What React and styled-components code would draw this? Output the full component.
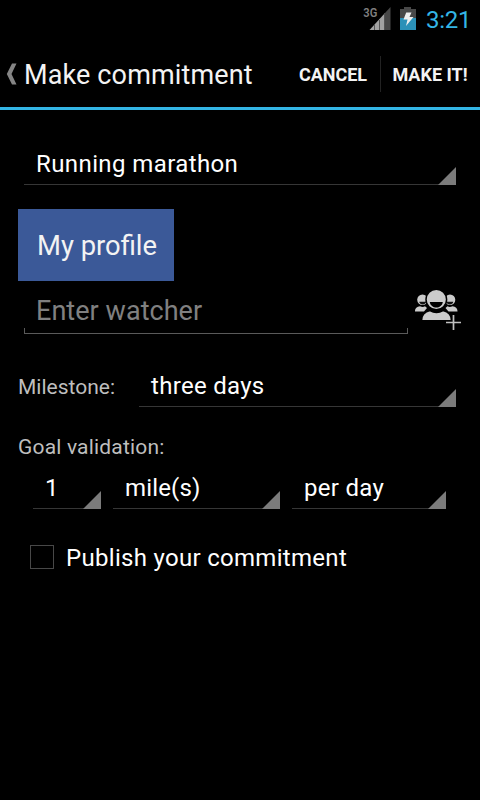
import React, { useState } from 'react';
import styled, { createGlobalStyle } from 'styled-components';

const GlobalStyle = createGlobalStyle`
  * {
    box-sizing: border-box;
  }

  body {
    margin: 0;
    background: #000;
    font-family: Roboto, sans-serif;
  }
`;

const Screen = styled.div`
  width: 480px;
  height: 800px;
  overflow: hidden;
  background: #000;
  color: #fff;
`;

const StatusBar = styled.header`
  display: flex;
  justify-content: flex-end;
  height: 38px;
  padding-right: 10px;
`;

const Clock = styled.span`
  width: 44px;
  margin-left: 9px;
  font-size: 24px;
  line-height: 40px;
  letter-spacing: -0.3px;
  color: #33b5e5;
`;

const ActionBar = styled.nav`
  display: flex;
  align-items: center;
  height: 72px;
  padding: 3px 0 0 6px;
  border-bottom: 3px solid #33b5e5;
`;

const Title = styled.h1`
  flex: 1;
  margin: 0 0 0 6px;
  padding-top: 2px;
  font-size: 27px;
  font-weight: 400;
  line-height: 36px;
  letter-spacing: 0.13px;
  color: #f3f3f3;
  white-space: nowrap;
`;

const Action = styled.button`
  width: ${(p) => p.$width}px;
  height: 36px;
  padding: 1px 1px 0 0;
  border: 0;
  border-left: ${(p) => (p.$divided ? '1px solid #222' : '0')};
  background: none;
  font: 700 18px/36px Roboto, sans-serif;
  color: #f3f3f3;
  white-space: nowrap;
`;

const Form = styled.main`
  display: flex;
  flex-direction: column;
  padding: 33px 18px 0;
`;

const Row = styled.div`
  display: flex;
  align-items: flex-start;
  height: ${(p) => p.$height}px;
  padding-left: ${(p) => p.$indent || 0}px;
  gap: ${(p) => p.$gap || 0}px;
`;

// the line under the value and the corner triangle are both part of the spinner
const SpinnerBox = styled.div`
  display: flex;
  justify-content: space-between;
  align-items: flex-end;
  width: ${(p) => p.$width}px;
  height: 42px;
  padding-left: 12px;
  border-bottom: 1px solid #363636;
`;

const SpinnerValue = styled.span`
  font-size: 24px;
  line-height: 40px;
  letter-spacing: ${(p) => p.$spacing};
  white-space: nowrap;
`;

const Corner = styled.i`
  width: 18px;
  height: 18px;
  margin-bottom: -1px;
  background: #7b7b7b;
  clip-path: polygon(100% 0, 100% 100%, 0 100%);
`;

const ProfileButton = styled.button`
  width: 156px;
  height: 72px;
  padding: 1px 0 0 2px;
  border: 0;
  background: #3b5998;
  font: 400 27.4px/72px Roboto, sans-serif;
  color: #f3f3f3;
`;

const WatcherInput = styled.input`
  width: 384px;
  height: 47px;
  padding: 0 12px;
  border: 0;
  outline: 0;
  background:
    linear-gradient(#5a5a5a, #5a5a5a) 0 100% / 100% 1px no-repeat,
    linear-gradient(#5a5a5a, #5a5a5a) 0 100% / 1px 6px no-repeat,
    linear-gradient(#5a5a5a, #5a5a5a) 100% 100% / 1px 6px no-repeat;
  font: 400 27px Roboto, sans-serif;
  letter-spacing: 0.05px;
  color: #fff;

  &::placeholder {
    color: #808080;
    opacity: 1;
  }
`;

const Label = styled.span`
  width: ${(p) => p.$width}px;
  padding-top: ${(p) => p.$drop || 0}px;
  font-size: 21px;
  line-height: 44px;
  letter-spacing: ${(p) => p.$spacing};
  color: #bebebe;
  white-space: nowrap;
`;

const CheckLabel = styled.label`
  display: flex;
  align-items: center;
  gap: 12px;
  height: 48px;
  padding-left: 12px;
  font-size: 24px;
  letter-spacing: 0.3px;
  white-space: nowrap;

  span {
    padding-top: 2px;
  }
`;

const Check = styled.input`
  appearance: none;
  width: 24px;
  height: 24px;
  margin: 0;
  border: 1px solid #484848;

  &:checked {
    background: #33b5e5;
  }
`;

function StatusIcons() {
  return (
    <svg width="54" height="38" viewBox="0 0 54 38">
      <text x="0.3" y="17" fontFamily="Roboto" fontWeight="600" fontSize="12.8" textLength="14" lengthAdjust="spacingAndGlyphs" fill="#7f7f7f">3G</text>
      {/* signal */}
      <path d="M22 13 27.500 7V30H22Z" fill="#484848" />
      <path d="M6.500 30 22 13V30Z" fill="#a2a2a2" />
      <path d="M11.500 25v5M16.500 20v10M21.500 14v16" stroke="#555" />
      {/* battery */}
      <path d="M41 7h7v2h5v9H37V9h4Z" fill="#484848" />
      <path d="M37 18h16v12H37Z" fill="#2b91b8" />
      <path d="M43.200 12.500h5.300l-2 4.500h4l-7.500 9 1.500-6.500h-4Z" fill="#eee" />
    </svg>
  );
}

function BackIcon() {
  return (
    <svg width="12" height="24" viewBox="0 0 12 24">
      <path d="M6 1.500h4.500L5.500 12l5 10.500H6L.8 12Z" fill="#858585" />
    </svg>
  );
}

const IconButton = styled.button`
  height: 44px;
  padding: 0;
  border: 0;
  background: none;

  svg {
    display: block;
  }
`;

function GroupMember() {
  return (
    <>
      <circle cx="8.500" cy="12.700" r="5.300" />
      <path d="M1 24.500c0-3.500 2-5 5-5.300 2 1 3.500 1 5 0L13 21l-3 3.500Z" />
      <path d="M5.200 14.800h7c-.5 3.500-6.500 3.500-7 0Z" fill="#111" />
    </>
  );
}

function AddGroupIcon() {
  return (
    <svg width="48" height="44" viewBox="0 0 48 44" fill="#cbcbcb">
      <GroupMember />
      <g transform="matrix(-1 0 0 1 44.500 0)">
        <GroupMember />
      </g>
      <g stroke="#000" strokeWidth="1.500">
        <path d="M7.500 33.700c0-6 3.500-9.200 8.500-10.200 4 2.500 9 2.500 13 0 5 1 8.500 4.200 8.500 10.200Z" />
        <circle cx="22.300" cy="12.500" r="10.300" />
      </g>
      <path d="M15.800 15h13c-.8 7.300-12.200 7.300-13 0Z" fill="#000" />
      <path d="M39.500 27v17M31 35.500h17" stroke="#000" strokeWidth="3.500" />
      <path d="M39.500 28v15M32 35.500h15" stroke="#c0c0c0" strokeWidth="1.700" />
    </svg>
  );
}

function Spinner({ width, spacing = '0.3px', children }) {
  return (
    <SpinnerBox $width={width}>
      <SpinnerValue $spacing={spacing}>{children}</SpinnerValue>
      <Corner />
    </SpinnerBox>
  );
}

function App() {
  const [watcher, setWatcher] = useState('');

  return (
    <>
      <GlobalStyle />
      <Screen>
        <StatusBar>
          <StatusIcons />
          <Clock>3:21</Clock>
        </StatusBar>
        <ActionBar>
          <BackIcon />
          <Title>Make commitment</Title>
          <Action $width={93}>CANCEL</Action>
          <Action $width={100} $divided>MAKE IT!</Action>
        </ActionBar>
        <Form>
          <Row $height={66} $indent={6}>
            <Spinner width={432} spacing="0.4px">Running marathon</Spinner>
          </Row>
          <Row $height={78}>
            <ProfileButton>My profile</ProfileButton>
          </Row>
          <Row $height={78} $indent={6} $gap={6}>
            <WatcherInput
              placeholder="Enter watcher"
              value={watcher}
              onChange={(e) => setWatcher(e.target.value)}
            />
            <IconButton aria-label="Add watcher">
              <AddGroupIcon />
            </IconButton>
          </Row>
          <Row $height={59}>
            <Label $width={121}>Milestone:</Label>
            <Spinner width={317}>three days</Spinner>
          </Row>
          <Row $height={43}>
            <Label $drop={1} $spacing="0.18px">Goal validation:</Label>
          </Row>
          <Row $height={66} $indent={15} $gap={12}>
            <Spinner width={68}>1</Spinner>
            <Spinner width={167} spacing="0.15px">mile(s)</Spinner>
            <Spinner width={154}>per day</Spinner>
          </Row>
          <CheckLabel>
            <Check type="checkbox" />
            <span>Publish your commitment</span>
          </CheckLabel>
        </Form>
      </Screen>
    </>
  );
}

export default App;
